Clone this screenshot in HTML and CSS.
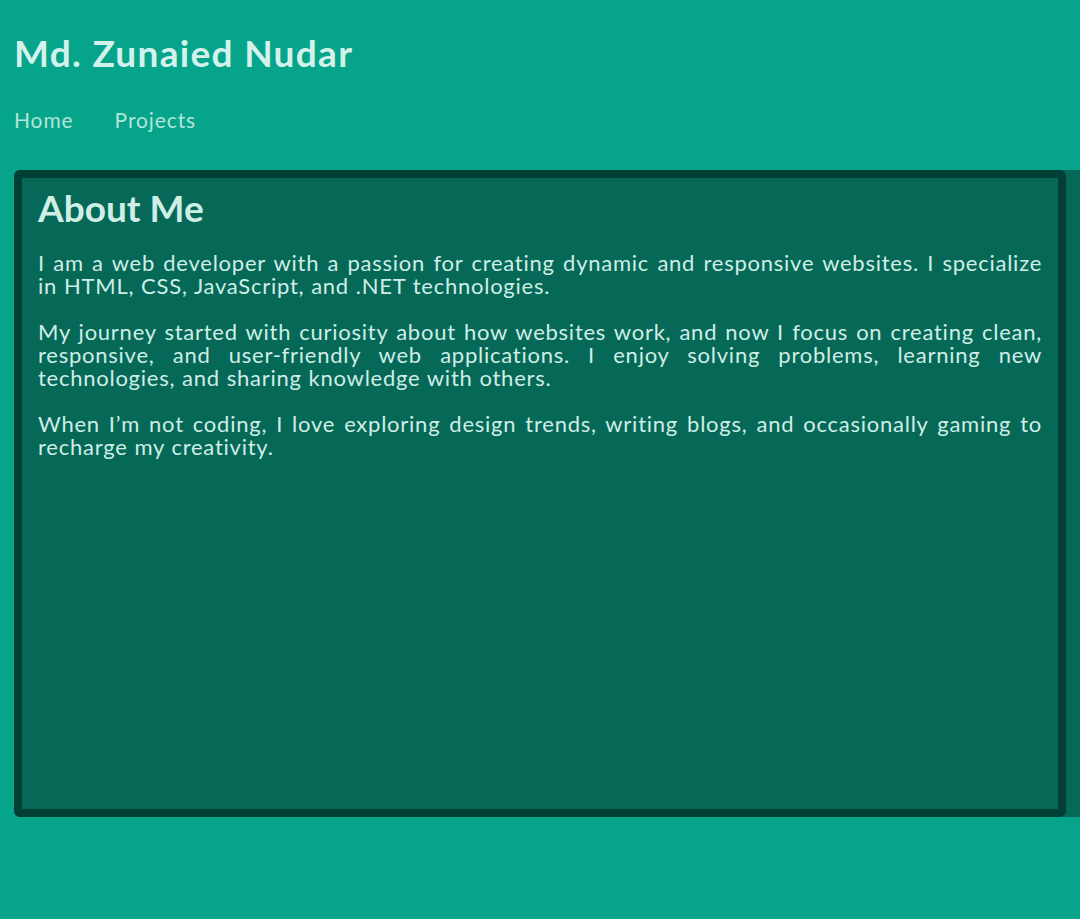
FILE: index.html
```html
<!DOCTYPE html>
<html lang="en">
<head>
<meta charset="utf-8">
<title>Md. Zunaied Nudar</title>
<link rel="stylesheet" href="styles.css">
</head>
<body>
<header class="site-header">
  <h1 class="site-title">Md. Zunaied Nudar</h1>
  <nav class="nav">
    <a class="nav-link" href="#">Home</a>
    <a class="nav-link" href="#">Projects</a>
  </nav>
</header>
<main class="main">
  <section class="card">
    <h2 class="card-title">About Me</h2>
    <p class="card-text">I am a web developer with a passion for creating dynamic and responsive websites. I specialize in HTML, CSS, JavaScript, and .NET technologies.</p>
    <p class="card-text">My journey started with curiosity about how websites work, and now I focus on creating clean, responsive, and user-friendly web applications. I enjoy solving problems, learning new technologies, and sharing knowledge with others.</p>
    <p class="card-text">When I’m not coding, I love exploring design trends, writing blogs, and occasionally gaming to recharge my creativity.</p>
  </section>
</main>
</body>
</html>
```
FILE: styles.css
```css
html, body {
  margin: 0;
  padding: 0;
}
body {
  background: #06a48a;
  font-family: "Lato", "Open Sans", sans-serif;
  color: #cfeee6;
  overflow-x: hidden;
}
.site-header {
  padding: 30px 14px 0 14px;
}
.site-title {
  margin: 0;
  font-size: 37px;
  line-height: 46px;
  font-weight: 700;
  letter-spacing: 1.3px;
  color: #d4f2ec;
}
.nav {
  display: flex;
  gap: 41px;
  margin-top: 32px;
}
.nav-link {
  color: #b3e4d9;
  text-decoration: none;
  font-size: 21px;
  line-height: 24px;
  letter-spacing: 0.9px;
}
.main {
  margin: 38px 0 0 14px;
  background: #066857;
  border-radius: 6px 0 0 6px;
}
.card {
  margin-right: 14px;
  height: 631px;
  border: 8px solid #023f35;
  border-radius: 6px;
  padding: 0 16px;
}
.card-title {
  margin: 10px 0 23px 0;
  font-size: 37px;
  line-height: 40px;
  font-weight: 700;
  color: #cfeee6;
}
.card-text {
  margin: 0 0 23px 0;
  font-size: 22px;
  line-height: 23px;
  letter-spacing: 0.75px;
  word-spacing: 0.5px;
  text-align: justify;
}
```
